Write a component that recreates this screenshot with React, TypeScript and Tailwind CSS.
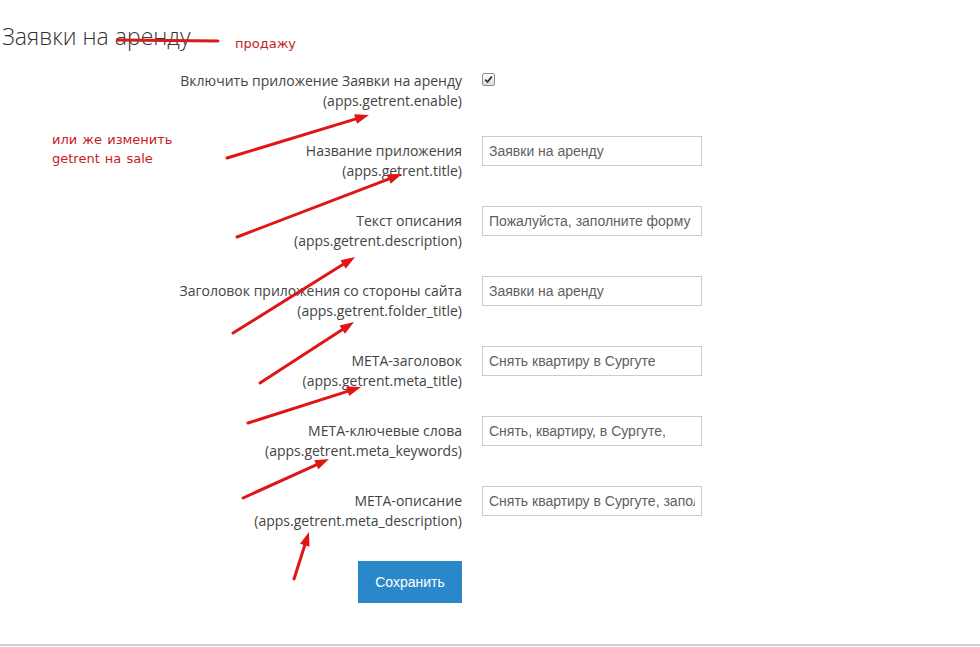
import React from 'react';

const fields = [
  { label: 'Название приложения', key: 'apps.getrent.title', value: 'Заявки на аренду' },
  { label: 'Текст описания', key: 'apps.getrent.description', value: 'Пожалуйста, заполните форму' },
  { label: 'Заголовок приложения со стороны сайта', key: 'apps.getrent.folder_title', value: 'Заявки на аренду' },
  { label: 'МЕТА-заголовок', key: 'apps.getrent.meta_title', value: 'Снять квартиру в Сургуте' },
  { label: 'МЕТА-ключевые слова', key: 'apps.getrent.meta_keywords', value: 'Снять, квартиру, в Сургуте,' },
  { label: 'МЕТА-описание', key: 'apps.getrent.meta_description', value: 'Снять квартиру в Сургуте, заполнив заявку' },
];

const arrows = [
  [227, 158, 369, 115],
  [237, 237, 402, 174],
  [233, 333, 355, 257],
  [260, 383, 354, 322],
  [248, 423, 361, 387],
  [243, 498, 329, 459],
  [294, 579, 309, 532],
];

const Arrow: React.FC<{ x1: number; y1: number; x2: number; y2: number }> = ({ x1, y1, x2, y2 }) => {
  const dx = x2 - x1;
  const dy = y2 - y1;
  const len = Math.hypot(dx, dy);
  const ux = dx / len;
  const uy = dy / len;
  const hl = 14;
  const hw = 5;
  const bx = x2 - ux * hl;
  const by = y2 - uy * hl;
  const points = `${x2},${y2} ${bx - uy * hw},${by + ux * hw} ${bx + uy * hw},${by - ux * hw}`;
  return <g>
      <line x1={x1} y1={y1} x2={bx + ux * 3} y2={by + uy * 3} stroke="#df1616" strokeWidth={3} strokeLinecap="round" />
      <polygon points={points} fill="#df1616" />
    </g>;
};

const Row: React.FC<{ label: string; code: string; children: React.ReactNode }> = ({ label, code, children }) => <div className="flex h-[70px]">
    <div className="w-[462px] pt-[5px] text-right text-[14px] leading-[20px] text-[#444]">
      <div>{label}</div>
      <div>({code})</div>
    </div>
    <div className="ml-5">{children}</div>
  </div>;

const App: React.FC = () => {
  return <div className="relative flex h-[647px] w-[980px] flex-col overflow-hidden bg-white font-['Open_Sans',sans-serif]">
      {/* Title */}
      <h1 className="pl-[2px] pt-[24px] text-[23px] font-light leading-[24px] text-[#333]">Заявки на аренду</h1>

      {/* Form */}
      <div className="mt-[18px] flex flex-col">
        <Row label="Включить приложение Заявки на аренду" code="apps.getrent.enable">
          <span className="mt-[7px] flex h-[13px] w-[13px] items-center justify-center rounded-[2px] border border-[#8e8e8e] bg-gradient-to-b from-white to-[#dcdcdc]">
            <svg width="9" height="9" viewBox="0 0 9 9">
              <path d="M1.2 4.6 L3.5 7 L7.8 1.6" fill="none" stroke="#333" strokeWidth="1.8" />
            </svg>
          </span>
        </Row>
        {fields.map(f => <Row key={f.key} label={f.label} code={f.key}>
            <input readOnly value={f.value} className="h-[30px] w-[220px] border border-[#ccc] bg-white px-[6px] font-['Liberation_Sans',Arial,sans-serif] text-[14px] text-[#5f5f5f] outline-none" />
          </Row>)}
        <div className="flex">
          <div className="flex w-[462px] justify-end pt-[5px]">
            <button className="h-[42px] w-[104px] bg-[#2a87c9] font-['Liberation_Sans',Arial,sans-serif] text-[14px] text-white">
              Сохранить
            </button>
          </div>
        </div>
      </div>

      {/* Bottom rule */}
      <div className="mb-px mt-auto h-[2px] bg-[#cfcfcf]" />

      {/* Annotations */}
      <svg className="pointer-events-none absolute inset-0" width="980" height="647">
        <line x1="118" y1="40" x2="218" y2="41" stroke="#d81a1a" strokeWidth={3} strokeLinecap="round" />
        {arrows.map(([x1, y1, x2, y2], i) => <Arrow key={i} x1={x1} y1={y1} x2={x2} y2={y2} />)}
      </svg>
      <div className="absolute left-[235px] top-[35px] font-['DejaVu_Sans',Verdana,sans-serif] text-[13px] leading-[18px] text-[#c8201f]">
        продажу
      </div>
      <div className="absolute left-[52px] top-[130px] font-['DejaVu_Sans',Verdana,sans-serif] text-[13px] leading-[19px] text-[#c8201f] [word-spacing:1px]">
        <div>или же изменить</div>
        <div>getrent на sale</div>
      </div>
    </div>;
};

export default App;
